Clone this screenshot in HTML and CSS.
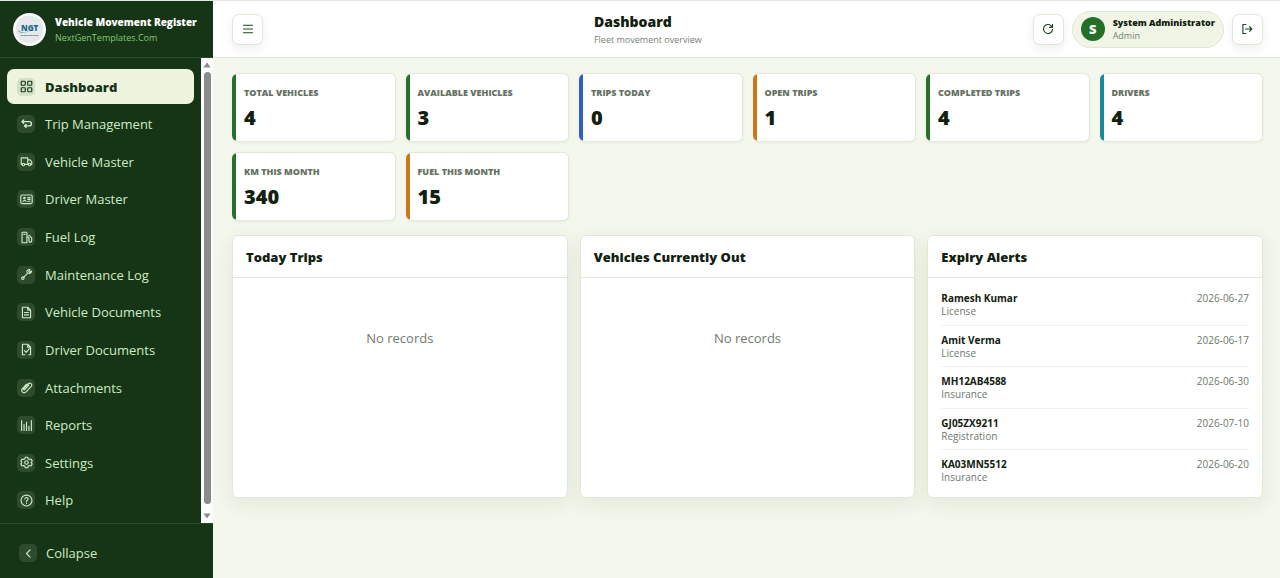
FILE: index.html
```html
<!DOCTYPE html>
<html lang="en">
<head>
  <meta charset="UTF-8">
  <meta name="viewport" content="width=device-width, initial-scale=1.0">
  <title>Vehicle Movement Register</title>
  <link rel="stylesheet" href="styles.css">
</head>
<body>
  <div class="app">
    <!-- Sidebar -->
    <aside class="sidebar">
      <div class="brand">
        <svg class="brand-logo" viewBox="0 0 33 33" aria-hidden="true">
          <circle cx="16.500" cy="16.500" r="16.500" fill="#fff"/>
          <circle cx="16.500" cy="16.500" r="14" fill="#e6e9ec"/>
          <path d="M5.500 17c-1.500 4 8 3.500 14-.5-5 3-12.500 4-14 .5z" fill="#2b9fb0"/>
          <text x="8" y="18" class="logo-text">NGT</text>
          <path d="M8 22.500h17" stroke="#8a969c" stroke-width="1" stroke-dasharray="2 1"/>
        </svg>
        <div class="brand-text">
          <strong>Vehicle Movement Register</strong>
          <span>NextGenTemplates.Com</span>
        </div>
      </div>

      <div class="nav-wrap">
        <nav class="nav">
          <a href="#" class="nav-link active">
            <span class="nav-icon"><svg viewBox="0 0 16 16"><rect x="1.500" y="1.500" width="5" height="5" rx="1"/><rect x="9.500" y="1.500" width="5" height="5" rx="1"/><rect x="1.500" y="9.500" width="5" height="5" rx="1"/><rect x="9.500" y="9.500" width="5" height="5" rx="1"/></svg></span>
            Dashboard
          </a>
          <a href="#" class="nav-link">
            <span class="nav-icon"><svg viewBox="0 0 16 16"><path d="M4.500 2.500L2.500 4.500l2 2M2.500 4.500h9a2.600 2.600 0 0 1 0 5.200H6M7.500 8L5.500 9.700l2 1.800" stroke-width="1.700"/></svg></span>
            Trip Management
          </a>
          <a href="#" class="nav-link">
            <span class="nav-icon"><svg viewBox="0 0 16 16"><path d="M2.500 11.500H1.500v-8h8v8H6M9.500 6h3l2 2.500v3h-1M9.500 11.500h.5"/><circle cx="4.300" cy="11.700" r="1.500"/><circle cx="11.800" cy="11.700" r="1.500"/></svg></span>
            Vehicle Master
          </a>
          <a href="#" class="nav-link">
            <span class="nav-icon"><svg viewBox="0 0 16 16"><rect x="1" y="2.500" width="14" height="10.500" rx="1.500"/><circle cx="5.500" cy="6.300" r="1"/><path d="M3.800 10.300c.5-1.500 3-1.500 3.500 0M9.500 5.700h3M9.500 7.900h3M9.500 10.100h3"/></svg></span>
            Driver Master
          </a>
          <a href="#" class="nav-link">
            <span class="nav-icon"><svg viewBox="0 0 16 16"><path d="M2.500 14.500V2.500a1 1 0 0 1 1-1h4a1 1 0 0 1 1 1v12zM4.500 4h2M8.500 7.500H10a1 1 0 0 1 1 1V12a1.700 1.700 0 0 0 3.400 0V8.500L11 5"/></svg></span>
            Fuel Log
          </a>
          <a href="#" class="nav-link">
            <span class="nav-icon"><svg viewBox="0 0 16 16"><circle cx="3.500" cy="12.500" r="1.500"/><path d="M4.500 11.500L9.700 6M14.200 3.800l-2.400 1.400-1-1.200 1.400-2c-2.400-.5-4.200 1-3.700 3.200M14.200 3.800c.1 1.900-1.600 3.100-3.500 2.700"/></svg></span>
            Maintenance Log
          </a>
          <a href="#" class="nav-link">
            <span class="nav-icon"><svg viewBox="0 0 16 16"><path d="M3 14.500v-13h6.500L13 5v9.500zM9.500 1.500V5H13M5.500 8h5M5.500 11h5"/></svg></span>
            Vehicle Documents
          </a>
          <a href="#" class="nav-link">
            <span class="nav-icon"><svg viewBox="0 0 16 16"><path d="M6 14.500H3v-13h6.500L13 5v9.500h-2M9.500 1.500V5H13M5.500 9.500l2 2L11.500 7"/></svg></span>
            Driver Documents
          </a>
          <a href="#" class="nav-link">
            <span class="nav-icon"><svg viewBox="0 0 16 16"><path d="M10.800 5.200l-5 5.300c-.9.900-2-.1-1.200-1.100l5.600-6c2.300-2.300 5.700.9 3.600 3.300l-6.300 6.700c-3 3-7.200-1-4.500-4L8 4"/></svg></span>
            Attachments
          </a>
          <a href="#" class="nav-link">
            <span class="nav-icon"><svg viewBox="0 0 16 16"><path d="M2 2v12M5 7v7M8 4v10M11 9v5M14 2v12"/></svg></span>
            Reports
          </a>
          <a href="#" class="nav-link">
            <span class="nav-icon"><svg viewBox="0 0 16 16"><path d="M6.500 1.500h3l.5 2 1.500.8 2-.6L15 6.300 13.600 8l1.400 1.700-1.500 2.600-2-.6-1.500.8-.5 2h-3l-.5-2-1.500-.8-2 .6L1 9.700 2.400 8 1 6.300l1.500-2.600 2 .6L6 3.500z"/><circle cx="8" cy="8" r="2.200"/></svg></span>
            Settings
          </a>
          <a href="#" class="nav-link">
            <span class="nav-icon"><svg viewBox="0 0 16 16"><circle cx="8" cy="8" r="6.700"/><path d="M6 6.200c0-2.600 4.200-2.400 4 0-.1 1.400-2 1.400-2 3M8 11.300v.4"/></svg></span>
            Help
          </a>
        </nav>
        <div class="scrollbar" aria-hidden="true">
          <svg viewBox="0 0 10 7"><path d="M5 0.500L9.500 6.500H.5z"/></svg>
          <span class="scroll-thumb"></span>
          <svg viewBox="0 0 10 7"><path d="M5 6.500L.5.500h9z"/></svg>
        </div>
      </div>

      <button class="collapse" type="button">
        <span class="nav-icon"><svg viewBox="0 0 16 16"><path d="M10 3.500L5.500 8l4.500 4.500"/></svg></span>
        Collapse
      </button>
    </aside>

    <div class="main">
      <!-- Top bar -->
      <header class="topbar">
        <button class="icon-button" type="button" aria-label="Toggle menu"><svg viewBox="0 0 16 16"><path d="M2 3h12M2 8h12M2 13h12"/></svg></button>
        <div class="page-title">
          <h1>Dashboard</h1>
          <p>Fleet movement overview</p>
        </div>
        <div class="topbar-actions">
          <button class="icon-button" type="button" aria-label="Refresh"><svg viewBox="0 0 16 16"><path d="M14 8.500A6 6 0 1 1 12 3.500L14 5.500M14 1.800v4h-4"/></svg></button>
          <div class="user">
            <span class="avatar">S</span>
            <div class="user-text">
              <strong>System Administrator</strong>
              <span>Admin</span>
            </div>
          </div>
          <button class="icon-button" type="button" aria-label="Log out"><svg viewBox="0 0 16 16"><path d="M6.500 2H2.500v12h4M6 8h8.500M11.500 5l3 3-3 3"/></svg></button>
        </div>
      </header>

      <main class="content">
        <!-- Summary cards -->
        <section class="stats">
          <div class="stat green"><span>Total Vehicles</span><strong>4</strong></div>
          <div class="stat green"><span>Available Vehicles</span><strong>3</strong></div>
          <div class="stat blue"><span>Trips Today</span><strong>0</strong></div>
          <div class="stat orange"><span>Open Trips</span><strong>1</strong></div>
          <div class="stat green"><span>Completed Trips</span><strong>4</strong></div>
          <div class="stat teal"><span>Drivers</span><strong>4</strong></div>
          <div class="stat green"><span>KM This Month</span><strong>340</strong></div>
          <div class="stat orange"><span>Fuel This Month</span><strong>15</strong></div>
        </section>

        <section class="panels">
          <div class="panel">
            <h2>Today Trips</h2>
            <p class="empty">No records</p>
          </div>
          <div class="panel">
            <h2>Vehicles Currently Out</h2>
            <p class="empty">No records</p>
          </div>
          <div class="panel">
            <h2>Expiry Alerts</h2>
            <ul class="alerts">
              <li><div><strong>Ramesh Kumar</strong><span>License</span></div><time>2026-06-27</time></li>
              <li><div><strong>Amit Verma</strong><span>License</span></div><time>2026-06-17</time></li>
              <li><div><strong>MH12AB4588</strong><span>Insurance</span></div><time>2026-06-30</time></li>
              <li><div><strong>GJ05ZX9211</strong><span>Registration</span></div><time>2026-07-10</time></li>
              <li><div><strong>KA03MN5512</strong><span>Insurance</span></div><time>2026-06-20</time></li>
            </ul>
          </div>
        </section>
      </main>
    </div>
  </div>
</body>
</html>
```
FILE: styles.css
```css
* {
  box-sizing: border-box;
  margin: 0;
  padding: 0;
}

body {
  font-family: 'Open Sans', 'Noto Sans', sans-serif;
  background: #f4f7ec;
  color: #12200f;
}

button {
  font-family: inherit;
  cursor: pointer;
}

svg {
  fill: none;
  stroke: currentColor;
  stroke-linecap: round;
  stroke-linejoin: round;
}

.app {
  display: flex;
  min-height: 100vh;
  border-top: 1px solid #e4e6e4;
}

/* Sidebar */
.sidebar {
  display: flex;
  flex-direction: column;
  width: 213px;
  flex-shrink: 0;
  background: #163516;
  color: #cdebc4;
}

.brand {
  display: flex;
  align-items: center;
  gap: 9px;
  height: 57px;
  padding: 0 13px;
  border-bottom: 1px solid #2c482b;
}

.brand-logo {
  width: 33px;
  height: 33px;
  flex-shrink: 0;
  stroke: none;
}

.logo-text {
  font-size: 8px;
  font-weight: 800;
  fill: #1c6a8c;
}

.brand-text {
  display: flex;
  flex-direction: column;
  white-space: nowrap;
}

.brand-text strong {
  font-size: 10px;
  font-weight: 800;
  line-height: 16px;
  color: #fff;
}

.brand-text span {
  font-size: 9px;
  line-height: 15px;
  color: #83c873;
}

.nav-wrap {
  display: flex;
  flex: 1;
}

.nav {
  display: flex;
  flex-direction: column;
  justify-content: space-between;
  flex: 1;
  padding: 11px 7px 5px;
}

.nav-link {
  display: flex;
  align-items: center;
  gap: 10px;
  height: 35px;
  padding: 0 10px;
  border-radius: 7px;
  font-size: 13px;
  color: inherit;
  text-decoration: none;
}

.nav-link.active {
  background: #eef4de;
  color: #163516;
  font-weight: 800;
}

.nav-icon {
  display: flex;
  align-items: center;
  justify-content: center;
  width: 18px;
  height: 18px;
  border-radius: 5px;
  background: #2e4b2d;
}

.active .nav-icon {
  background: #d3e2c7;
}

.nav-icon svg {
  width: 13px;
  height: 13px;
  stroke-width: 1.4;
}

.scrollbar {
  display: flex;
  flex-direction: column;
  align-items: center;
  gap: 4px;
  width: 12px;
  padding: 4px 0;
  background: #fcfcfc;
}

.scrollbar svg {
  width: 8px;
  height: 6px;
  fill: #8b8b8b;
  stroke: none;
}

.scroll-thumb {
  flex: 1;
  width: 7px;
  margin-bottom: 5px;
  border-radius: 4px;
  background: #8b8b8b;
}

.collapse {
  display: flex;
  align-items: center;
  gap: 9px;
  height: 55px;
  padding: 4px 19px 0;
  border: none;
  border-top: 1px solid #2c482b;
  background: none;
  color: inherit;
  font-size: 13px;
}

/* Top bar */
.main {
  flex: 1;
  min-width: 0;
}

.topbar {
  display: flex;
  align-items: center;
  justify-content: space-between;
  height: 57px;
  padding: 0 17px 0 19px;
  background: #fff;
  border-bottom: 1px solid #e3e9d8;
}

.page-title h1 {
  font-size: 14px;
  font-weight: 800;
  line-height: 20px;
}

.page-title p {
  font-size: 9px;
  line-height: 15px;
  color: #778174;
}

.topbar-actions {
  display: flex;
  align-items: center;
  gap: 8px;
}

.icon-button {
  display: flex;
  align-items: center;
  justify-content: center;
  width: 31px;
  height: 31px;
  border: 1px solid #dfe7d8;
  border-radius: 7px;
  background: #fff;
  color: #1d4420;
  box-shadow: 0 4px 10px rgba(30, 70, 30, 0.08);
}

.icon-button svg {
  width: 12px;
  height: 12px;
  stroke-width: 1.5;
}

.user {
  display: flex;
  align-items: center;
  gap: 8px;
  height: 37px;
  padding: 0 8px;
  border: 1px solid #dfe7d2;
  border-radius: 19px;
  background: #f0f5e6;
}

.avatar {
  display: flex;
  align-items: center;
  justify-content: center;
  width: 24px;
  height: 24px;
  border-radius: 50%;
  background: #257029;
  color: #fff;
  font-size: 13px;
  font-weight: 800;
}

.user-text {
  display: flex;
  flex-direction: column;
}

.user-text strong {
  font-size: 9px;
  font-weight: 800;
  line-height: 13px;
}

.user-text span {
  font-size: 9px;
  line-height: 13px;
  color: #778174;
}

/* Dashboard */
.content {
  padding: 15px 17px 15px 19px;
}

.stats {
  display: grid;
  grid-template-columns: repeat(6, 1fr);
  gap: 10px;
  margin-bottom: 14px;
}

.stat {
  display: flex;
  flex-direction: column;
  gap: 6px;
  height: 69px;
  padding: 11px 12px;
  border: 1px solid #e1e8d8;
  border-left: none;
  border-radius: 6px;
  background: linear-gradient(var(--accent), var(--accent)) no-repeat left / 4px 100% #fff;
  box-shadow: 0 1px 3px rgba(30, 70, 30, 0.06);
}

.stat span {
  font-size: 9px;
  font-weight: 800;
  line-height: 15px;
  color: #667062;
  text-transform: uppercase;
}

.stat strong {
  font-size: 20px;
  font-weight: 800;
  line-height: 24px;
}

.green {
  --accent: #27702b;
}

.blue {
  --accent: #2f5fc4;
}

.orange {
  --accent: #c87819;
}

.teal {
  --accent: #188a9c;
}

.panels {
  display: grid;
  grid-template-columns: repeat(3, 1fr);
  gap: 12px;
}

.panel {
  display: flex;
  flex-direction: column;
  min-height: 263px;
  border: 1px solid #e1e8d8;
  border-radius: 6px;
  background: #fff;
  box-shadow: 0 6px 20px rgba(40, 90, 40, 0.09);
}

.panel h2 {
  padding: 11px 13px 10px;
  border-bottom: 1px solid #e3e9dd;
  font-size: 13px;
  font-weight: 800;
  line-height: 20px;
}

.empty {
  padding-top: 50px;
  text-align: center;
  font-size: 13px;
  line-height: 20px;
  color: #727b70;
}

.alerts {
  display: flex;
  flex-direction: column;
  flex: 1;
  padding: 6px 13px;
  list-style: none;
}

.alerts li {
  display: flex;
  flex: 1;
  justify-content: space-between;
  padding: 7px 0 6px;
  border-bottom: 1px solid #edf0e6;
  font-size: 10px;
  line-height: 13px;
  color: #6d776b;
}

.alerts li:last-child {
  border-bottom: none;
}

.alerts div {
  display: flex;
  flex-direction: column;
}

.alerts strong,
.alerts time {
  line-height: 14px;
}

.alerts strong {
  color: #12200f;
}
```
